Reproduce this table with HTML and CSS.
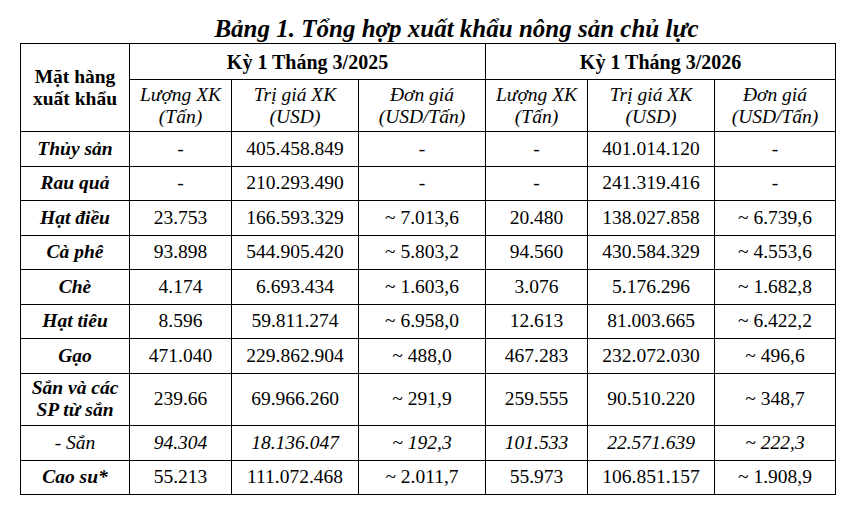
FILE: index.html
```html
<!DOCTYPE html>
<html lang="vi">
<head>
<meta charset="utf-8">
<title>Bảng 1</title>
<link rel="stylesheet" href="styles.css">
</head>
<body>
<div class="page">
  <div class="title">Bảng 1. Tổng hợp xuất khẩu nông sản chủ lực</div>
  <table class="data">
    <colgroup>
      <col class="c-name"><col class="c-q"><col class="c-v"><col class="c-p"><col class="c-q2"><col class="c-v"><col class="c-p2">
    </colgroup>
    <thead>
      <tr class="h1">
        <th rowspan="2" class="name-head">Mặt hàng<br>xuất khẩu</th>
        <th colspan="3" class="period">Kỳ 1 Tháng 3/2025</th>
        <th colspan="3" class="period">Kỳ 1 Tháng 3/2026</th>
      </tr>
      <tr class="h2">
        <th class="sub">Lượng XK<br>(Tấn)</th>
        <th class="sub">Trị giá XK<br>(USD)</th>
        <th class="sub">Đơn giá<br>(USD/Tấn)</th>
        <th class="sub">Lượng XK<br>(Tấn)</th>
        <th class="sub">Trị giá XK<br>(USD)</th>
        <th class="sub">Đơn giá<br>(USD/Tấn)</th>
      </tr>
    </thead>
    <tbody>
      <tr><td class="name">Thủy sản</td><td>-</td><td>405.458.849</td><td>-</td><td>-</td><td>401.014.120</td><td>-</td></tr>
      <tr><td class="name">Rau quả</td><td>-</td><td>210.293.490</td><td>-</td><td>-</td><td>241.319.416</td><td>-</td></tr>
      <tr><td class="name">Hạt điều</td><td>23.753</td><td>166.593.329</td><td>~ 7.013,6</td><td>20.480</td><td>138.027.858</td><td>~ 6.739,6</td></tr>
      <tr><td class="name">Cà phê</td><td>93.898</td><td>544.905.420</td><td>~ 5.803,2</td><td>94.560</td><td>430.584.329</td><td>~ 4.553,6</td></tr>
      <tr><td class="name">Chè</td><td>4.174</td><td>6.693.434</td><td>~ 1.603,6</td><td>3.076</td><td>5.176.296</td><td>~ 1.682,8</td></tr>
      <tr><td class="name">Hạt tiêu</td><td>8.596</td><td>59.811.274</td><td>~ 6.958,0</td><td>12.613</td><td>81.003.665</td><td>~ 6.422,2</td></tr>
      <tr><td class="name">Gạo</td><td>471.040</td><td>229.862.904</td><td>~ 488,0</td><td>467.283</td><td>232.072.030</td><td>~ 496,6</td></tr>
      <tr class="tall"><td class="name">Sắn và các<br>SP từ sắn</td><td>239.66</td><td>69.966.260</td><td>~ 291,9</td><td>259.555</td><td>90.510.220</td><td>~ 348,7</td></tr>
      <tr class="sub-row"><td class="name">- Sắn</td><td>94.304</td><td>18.136.047</td><td>~ 192,3</td><td>101.533</td><td>22.571.639</td><td>~ 222,3</td></tr>
      <tr><td class="name">Cao su*</td><td>55.213</td><td>111.072.468</td><td>~ 2.011,7</td><td>55.973</td><td>106.851.157</td><td>~ 1.908,9</td></tr>
    </tbody>
  </table>
</div>
</body>
</html>
```

FILE: styles.css
```css
html, body {
  margin: 0;
  padding: 0;
  background: #ffffff;
}
.page {
  padding: 0 0 0 20px;
  font-family: "Liberation Serif", "Times New Roman", serif;
  color: #000;
}
.title {
  width: 815px;
  padding-left: 58px;
  box-sizing: border-box;
  text-align: center;
  font-weight: bold;
  font-style: italic;
  font-size: 25px;
  line-height: 26px;
  padding-top: 16px;
  height: 43px;
}
.data {
  border-collapse: collapse;
  table-layout: fixed;
  width: 815px;
  font-size: 19.5px;
}
.c-name { width: 109px; }
.c-q { width: 102px; }
.c-v { width: 127px; }
.c-p { width: 127px; }
.c-q2 { width: 102px; }
.c-p2 { width: 121px; }
.data th, .data td {
  border: 1px solid #000;
  text-align: center;
  padding: 0;
  line-height: 22px;
}
.h1 th { height: 35px; }
.h2 th { height: 51px; }
.name-head { font-weight: bold; }
.period { font-weight: bold; font-size: 20px; }
.sub { font-weight: normal; font-style: italic; line-height: 23px; }
.data tbody tr { height: 34.5px; }
.data tbody tr.tall { height: 52px; }
.data tbody tr.sub-row { height: 35px; }
.name { font-weight: bold; font-style: italic; }
.sub-row td { font-style: italic; }
.sub-row td.name { font-weight: normal; }
```
